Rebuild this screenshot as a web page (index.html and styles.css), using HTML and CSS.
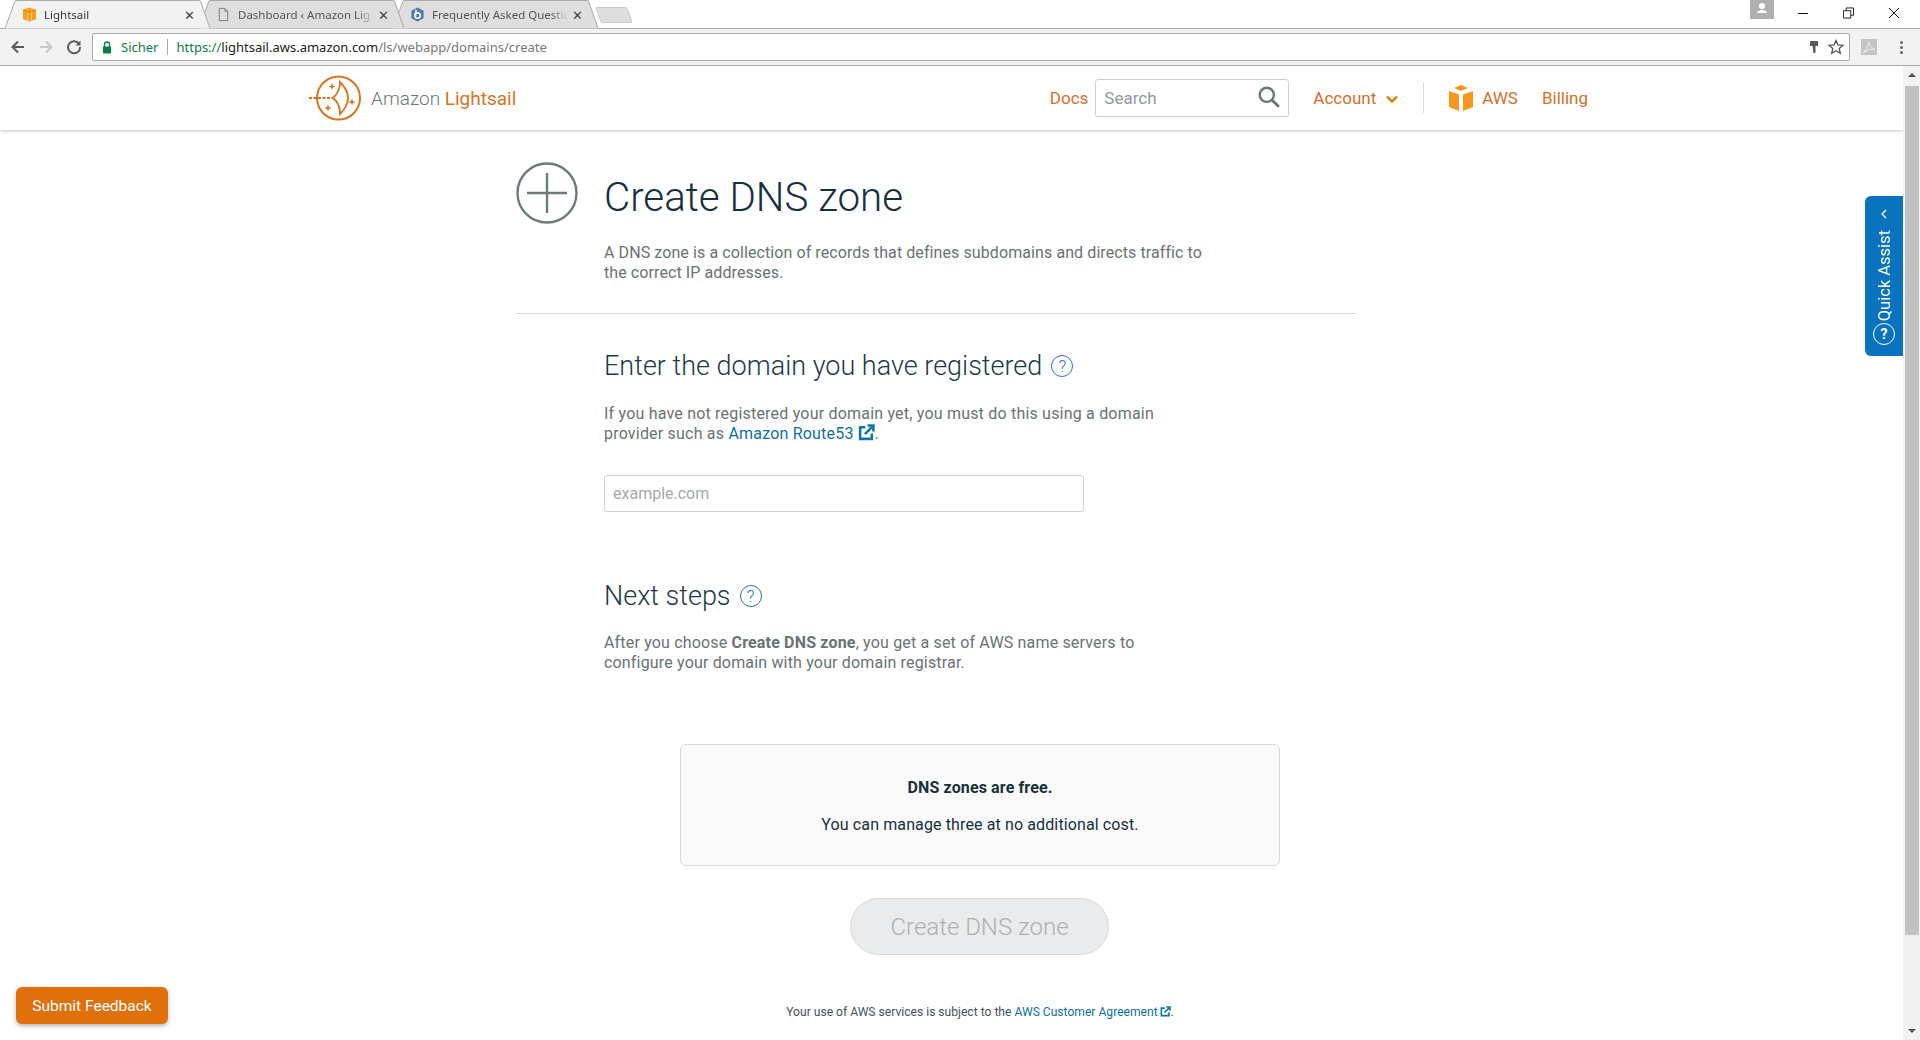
FILE: index.html
```html
<!DOCTYPE html>
<html lang="en">
<head>
    <meta charset="UTF-8">
    <meta name="viewport" content="width=device-width, initial-scale=1.0">
    <link rel="stylesheet" href="styles.css">
    <title>Lightsail</title>
</head>
<body>
    <div class="tabstrip">
        <div class="tab tab-active">
            <svg class="tab-shape" viewBox="0 0 210 29" preserveAspectRatio="none"><path d="M0 28.5 H5 L15 1 Q15.500 .5 17 .5 H198 Q200 .5 200.500 1 L210 28.500" fill="#f2f2f2" stroke="#a9a9a9"/></svg>
            <svg class="tab-icon" viewBox="0 0 16 16"><path d="M8 .5 L15 3 V13 L8 15.500 L1 13 V3Z" fill="#f7a01f"/><path d="M6 4 V15 M10 4 V15" stroke="#ffd58a" stroke-width=".8"/><path d="M1 3.500 L8 5.500 L15 3.500" fill="none" stroke="#c7781a" stroke-width=".8"/></svg>
            <span class="tab-title">Lightsail</span>
            <span class="tab-close">&#10005;</span>
        </div>
        <div class="tab tab-second">
            <svg class="tab-shape" viewBox="0 0 210 29" preserveAspectRatio="none"><path d="M0 28.5 H5 L15 1 Q15.500 .5 17 .5 H198 Q200 .5 200.500 1 L210 28.500" fill="#dedede" stroke="#a9a9a9"/></svg>
            <svg class="tab-icon" viewBox="0 0 16 16"><path d="M3.500 1.500 H9.500 L12.500 4.500 V14.500 H3.500Z M9.500 1.500 V4.500 H12.500" fill="none" stroke="#777"/></svg>
            <span class="tab-title">Dashboard &lsaquo; Amazon Lig</span>
            <span class="tab-close">&#10005;</span>
        </div>
        <div class="tab">
            <svg class="tab-shape" viewBox="0 0 210 29" preserveAspectRatio="none"><path d="M0 28.5 H5 L15 1 Q15.500 .5 17 .5 H198 Q200 .5 200.500 1 L210 28.500" fill="#dedede" stroke="#a9a9a9"/></svg>
            <svg class="tab-icon" viewBox="0 0 16 16"><path d="M8 .5 L14.500 4 V12 L8 15.500 L1.500 12 V4Z" fill="#4a7ba6"/><circle cx="8" cy="9" r="3" fill="none" stroke="#fff" stroke-width="1.600"/><path d="M6.300 3 V9" stroke="#fff" stroke-width="1.600"/></svg>
            <span class="tab-title">Frequently Asked Questic</span>
            <span class="tab-close">&#10005;</span>
        </div>
        <div class="newtab"></div>
        <div class="win-controls">
            <div class="profile">
                <svg viewBox="0 0 24 19" width="24" height="19"><circle cx="12" cy="6" r="3" fill="#fff"/><path d="M7 12 Q12 8 17 12 V13 H7Z" fill="#fff"/></svg>
            </div>
            <svg class="win-btn win-min" viewBox="0 0 12 12"><path d="M1 6.500 H11" stroke="#111"/></svg>
            <svg class="win-btn win-max" viewBox="0 0 12 12"><path d="M.5 3.500 H8.500 V11.500 H.5Z M3.500 3.500 V.5 H11.500 V8.500 H8.500" fill="none" stroke="#111"/></svg>
            <svg class="win-btn win-close" viewBox="0 0 12 12"><path d="M1 1 L11 11 M11 1 L1 11" stroke="#111"/></svg>
        </div>
    </div>

    <div class="toolbar">
        <svg class="nav-icon" viewBox="0 0 16 16"><path d="M14 8 H3 M8 2.500 L2.500 8 L8 13.500" fill="none" stroke="#5a5a5a" stroke-width="2"/></svg>
        <svg class="nav-icon" viewBox="0 0 16 16"><path d="M2 8 H13 M8 2.500 L13.500 8 L8 13.500" fill="none" stroke="#c8c8c8" stroke-width="2"/></svg>
        <svg class="nav-icon" viewBox="0 0 16 16"><path d="M13 5 A6 6 0 1 0 14 8" fill="none" stroke="#5a5a5a" stroke-width="2"/><path d="M14.500 1.500 V6.500 H9.500Z" fill="#5a5a5a"/></svg>
        <div class="omnibox">
            <svg class="lock" viewBox="0 0 10 13"><path d="M2.500 6 V3.500 A2.500 2.500 0 0 1 7.500 3.500 V6" fill="none" stroke="#0b8043" stroke-width="1.300"/><rect x="1" y="5.500" width="8" height="7" fill="#0b8043"/></svg>
            <span class="secure">Sicher</span>
            <span class="omni-sep"></span>
            <span class="url"><span class="url-https">https://</span><span class="url-host">lightsail.aws.amazon.com</span>/ls/webapp/domains/create</span>
            <svg class="omni-key" viewBox="0 0 10 14"><path d="M1 1 H9 V6 H6.500 V13 H4.500 L3.500 6 H1Z" fill="#5a5a5a"/></svg>
            <svg class="omni-star" viewBox="0 0 16 16"><path d="M8 1.500 L10 6 L14.800 6.400 L11.200 9.600 L12.300 14.300 L8 11.800 L3.700 14.300 L4.800 9.600 L1.200 6.400 L6 6Z" fill="none" stroke="#555" stroke-width="1.300"/></svg>
        </div>
        <div class="ext-pdf">
            <svg viewBox="0 0 16 16" width="16" height="16"><path d="M2 14 Q6 11 8 3 Q8 8 14 10 Q8 9 2 14Z" fill="none" stroke="#eee"/></svg>
        </div>
        <div class="chrome-menu"><i></i><i></i><i></i></div>
    </div>

    <div class="viewport">
        <div class="page">
            <header class="site-header">
                <a class="brand">
                    <svg class="brand-logo" viewBox="0 0 52 52">
                        <circle cx="29.500" cy="26" r="21.500" fill="none" stroke="#d8731f" stroke-width="2"/>
                        <path d="M0 26 H24" stroke="#d8731f" stroke-width="1.800" stroke-dasharray="3 1.500"/>
                        <path d="M31 10 Q31 20 24 26 Q31 31 31 42 Q47 26 31 10Z" fill="none" stroke="#d8731f" stroke-width="1.800"/>
                        <path d="M23 11 L24 13.500 L26.500 14.500 L24 15.500 L23 18 L22 15.500 L19.500 14.500 L22 13.500Z M43 26.500 L44 29 L46.500 30 L44 31 L43 33.500 L42 31 L39.500 30 L42 29Z M19 32.500 L20 35 L22.500 36 L20 37 L19 39.500 L18 37 L15.500 36 L18 35Z" fill="#d8731f"/>
                    </svg>
                    <span class="brand-name">Amazon <b>Lightsail</b></span>
                </a>
                <nav class="site-nav">
                    <a class="nav-link nav-docs">Docs</a>
                    <div class="search-box">
                        <span class="search-hint">Search</span>
                        <svg class="search-icon" viewBox="0 0 22 22"><circle cx="9" cy="9" r="6.500" fill="none" stroke="#6b7776" stroke-width="2.200"/><path d="M14 14 L20 20" stroke="#6b7776" stroke-width="2.600"/></svg>
                    </div>
                    <a class="nav-link nav-account">Account
                        <svg class="chevron" viewBox="0 0 12 8"><path d="M1 1.500 L6 6.500 L11 1.500" fill="none" stroke="#e07b00" stroke-width="2.400"/></svg>
                    </a>
                    <span class="nav-sep"></span>
                    <a class="nav-link nav-aws">
                        <svg class="cube" viewBox="0 0 26 26"><path d="M13 0 L20 3 L13 6 L6 3Z M1 6 L11 9.500 V26 L1 22Z M25 6 L15 9.500 V26 L25 22Z" fill="#f7981d"/></svg>
                        AWS
                    </a>
                    <a class="nav-link nav-billing">Billing</a>
                </nav>
            </header>

            <main class="content">
                <div class="title-row">
                    <svg class="plus-icon" viewBox="0 0 62 62"><circle cx="31" cy="31" r="29.500" fill="none" stroke="#6f7b7b" stroke-width="2.400"/><path d="M31 11 V51 M11 31 H51" stroke="#6f7b7b" stroke-width="2.400"/></svg>
                    <h1>Create DNS zone</h1>
                </div>
                <p class="lead">A DNS zone is a collection of records that defines subdomains and directs traffic to the correct IP addresses.</p>
                <hr class="divider">

                <section class="block">
                    <h2>Enter the domain you have registered <span class="help">?</span></h2>
                    <p>If you have not registered your domain yet, you must do this using a domain provider such as <a class="link">Amazon Route53 <svg class="ext" viewBox="0 0 16 16"><path d="M7 3 H2 V14 H13 V9" fill="none" stroke="#0f76a8" stroke-width="2.400"/><path d="M6.500 9.500 L13 3 M9 1.500 H14.500 V7" fill="none" stroke="#0f76a8" stroke-width="2.400"/></svg></a>.</p>
                    <input class="domain-input" type="text" placeholder="example.com">
                </section>

                <section class="block block-next">
                    <h2>Next steps <span class="help">?</span></h2>
                    <p>After you choose <b>Create DNS zone</b>, you get a set of AWS name servers to configure your domain with your domain registrar.</p>
                </section>

                <div class="free-panel">
                    <strong>DNS zones are free.</strong>
                    <span>You can manage three at no additional cost.</span>
                </div>
                <button class="create-btn" disabled>Create DNS zone</button>
                <p class="legal">Your use of AWS services is subject to the <a class="link">AWS Customer Agreement<svg class="ext ext-small" viewBox="0 0 16 16"><path d="M7 3 H2 V14 H13 V9" fill="none" stroke="#0f76a8" stroke-width="2.400"/><path d="M6.500 9.500 L13 3 M9 1.500 H14.500 V7" fill="none" stroke="#0f76a8" stroke-width="2.400"/></svg></a>.</p>
            </main>

            <button class="feedback-btn">Submit Feedback</button>
            <div class="quick-assist">
                <svg class="qa-chevron" viewBox="0 0 10 10"><path d="M7 1 L3 5 L7 9" fill="none" stroke="#fff" stroke-width="1.400"/></svg>
                <span class="qa-label">Quick Assist</span>
                <span class="qa-help">?</span>
            </div>
        </div>
        <div class="scrollbar">
            <span class="sb-up"></span>
            <span class="sb-thumb"></span>
            <span class="sb-down"></span>
        </div>
    </div>
</body>
</html>
```

FILE: styles.css
```css
* {
    box-sizing: border-box;
}

html, body {
    height: 100%;
}

body {
    display: flex;
    flex-direction: column;
    margin: 0;
    overflow: hidden;
    background-color: #fff;
    color: #687373;
    font-family: "Roboto", "Noto Sans", sans-serif;
    font-size: 16px;
}

/* browser chrome */
.tabstrip {
    display: flex;
    flex: none;
    height: 29px;
    border-bottom: 1px solid #a9a9a9;
}

.tab {
    position: relative;
    display: flex;
    flex: none;
    align-items: center;
    width: 210px;
    height: 29px;
    margin-right: -16px;
    padding-left: 22px;
    color: #555;
    font-family: "Noto Sans", sans-serif;
    font-size: 11.500px;
}

.tab-active {
    color: #333;
    z-index: 3;
}

.tab-second {
    z-index: 2;
}

.tab-shape {
    position: absolute;
    top: 0;
    left: 0;
    width: 100%;
    height: 29px;
}

.tab-icon {
    position: relative;
    flex: none;
    width: 15px;
    height: 15px;
    margin-right: 7px;
}

.tab-title {
    position: relative;
    width: 136px;
    margin-right: 4px;
    overflow: hidden;
    white-space: nowrap;
    mask-image: linear-gradient(to right, #000 88%, transparent);
}

.tab-close {
    position: relative;
    color: #444;
    font-size: 13px;
}

.newtab {
    width: 32px;
    height: 16px;
    margin: 7px 0 0 16px;
    background-color: #dedede;
    border: 1px solid #c9c9c9;
    border-radius: 2px;
    transform: skewX(20deg);
}

.win-controls {
    display: flex;
    align-items: flex-start;
    margin-left: auto;
    padding-right: 20px;
}

.profile {
    width: 24px;
    height: 19px;
    margin-right: 23px;
    background-color: #b0b0b0;
}

.win-btn {
    width: 12px;
    height: 12px;
    margin-top: 7px;
}

.win-min {
    margin-right: 34px;
}

.win-max {
    width: 11px;
    margin-right: 34px;
}

.toolbar {
    display: flex;
    flex: none;
    align-items: center;
    height: 37px;
    padding-left: 10px;
    background-color: #f2f2f2;
    border-bottom: 1px solid #a9a9a9;
}

.nav-icon {
    flex: none;
    width: 16px;
    height: 16px;
    margin-right: 12px;
}

.omnibox {
    display: flex;
    flex: none;
    align-items: center;
    width: 1758px;
    height: 28px;
    margin-left: -2px;
    padding-left: 9px;
    background-color: #fff;
    border: 1px solid #a9a9a9;
    border-radius: 2px;
    font-family: "Noto Sans", sans-serif;
    font-size: 13px;
}

.lock {
    width: 10px;
    height: 13px;
    margin-right: 9px;
}

.secure {
    color: #0b8043;
}

.omni-sep {
    width: 1px;
    height: 16px;
    margin: 0 8px 0 9px;
    background-color: #a9a9a9;
}

.url {
    color: #777;
}

.url-https {
    color: #0b8043;
}

.url-host {
    color: #222;
}

.omni-key {
    width: 10px;
    height: 14px;
    margin-left: auto;
    margin-right: 9px;
}

.omni-star {
    width: 16px;
    height: 16px;
    margin-right: 5px;
}

.ext-pdf {
    display: flex;
    align-items: center;
    justify-content: center;
    width: 16px;
    height: 16px;
    margin-left: 11px;
    background-color: #c4c4c4;
}

.chrome-menu {
    display: flex;
    flex-direction: column;
    gap: 2px;
    margin-left: 23px;
}

.chrome-menu i {
    display: block;
    width: 3px;
    height: 3px;
    background-color: #666;
    border-radius: 50%;
}

/* page */
.viewport {
    position: relative;
    display: flex;
    flex: 1;
    min-height: 0;
}

.page {
    position: relative;
    flex: 1;
    min-width: 0;
    overflow: hidden;
}

.site-header {
    display: flex;
    align-items: center;
    height: 64px;
    padding: 0 315px 0 309px;
    background-color: #fff;
    box-shadow: 0 1px 3px rgba(0, 0, 0, 0.25);
}

.brand {
    display: flex;
    align-items: center;
}

.brand-logo {
    width: 52px;
    height: 52px;
    margin-right: 10px;
}

.brand-name {
    color: #6b7776;
    font-size: 19px;
    font-weight: 300;
}

.brand-name b {
    color: #d8731f;
    font-weight: 400;
}

.site-nav {
    display: flex;
    align-items: center;
    margin-left: auto;
}

.nav-link {
    display: flex;
    align-items: center;
    color: #d0702a;
    font-size: 17px;
}

.search-box {
    display: flex;
    align-items: center;
    justify-content: space-between;
    width: 194px;
    height: 38px;
    margin: 0 24px 0 7px;
    padding: 0 7px 0 8px;
    border: 1px solid #ccd0d0;
    border-radius: 3px;
}

.search-hint {
    color: #8f9a9a;
    font-size: 17px;
}

.search-icon {
    width: 24px;
    height: 24px;
    margin-top: -3px;
}

.chevron {
    width: 12px;
    height: 8px;
    margin-left: 10px;
    margin-top: 2px;
}

.nav-sep {
    width: 1px;
    height: 30px;
    margin: 0 24px 0 25px;
    background-color: #d5d9d9;
}

.cube {
    width: 26px;
    height: 26px;
    margin-right: 8px;
}

.nav-billing {
    margin-left: 24px;
}

.content {
    width: 840px;
    margin-left: 516px;
}

.title-row {
    display: flex;
    align-items: center;
    height: 62px;
    margin-top: 32px;
}

.plus-icon {
    flex: none;
    width: 62px;
    height: 62px;
    margin-right: 26px;
}

h1 {
    margin: 8px 0 0;
    color: #16303e;
    font-size: 40.300px;
    font-weight: 300;
}

.lead {
    width: 612px;
    margin: 19px 0 0 88px;
    letter-spacing: 0.09px;
    line-height: 20px;
}

.divider {
    height: 1px;
    margin: 30px 0 0;
    border: 0;
    background-color: #d5d9d9;
}

.block {
    width: 565px;
    margin-left: 88px;
}

h2 {
    display: flex;
    align-items: center;
    gap: 9px;
    margin: 33px 0 0;
    color: #1e3a48;
    font-size: 27px;
    font-weight: 300;
    line-height: 38px;
}

.block p {
    margin: 19px 0 0;
    letter-spacing: 0.2px;
    line-height: 20px;
}

.help {
    display: flex;
    flex: none;
    align-items: center;
    justify-content: center;
    width: 22px;
    height: 22px;
    color: #2a6fc0;
    border: 1.500px solid #2a6fc0;
    border-radius: 50%;
    font-size: 17px;
}

.link {
    color: #0f6fa3;
}

.ext {
    width: 17px;
    height: 17px;
    vertical-align: -2px;
}

.ext-small {
    width: 11px;
    height: 11px;
    margin-left: 2px;
    vertical-align: -1px;
}

.domain-input {
    display: block;
    width: 480px;
    height: 37px;
    margin-top: 31px;
    padding: 0 8px;
    border: 1px solid #ccd0d0;
    border-radius: 3px;
    font-family: inherit;
    font-size: 16px;
}

.domain-input::placeholder {
    color: #a3abab;
}

.block-next h2 {
    margin-top: 65px;
}

.block-next p {
    margin-top: 18px;
    letter-spacing: 0.17px;
}

.free-panel {
    display: flex;
    flex-direction: column;
    align-items: center;
    gap: 18px;
    width: 600px;
    height: 122px;
    margin: 71px 0 0 164px;
    padding-top: 33px;
    color: #16303e;
    background-color: #fafafa;
    border: 1px solid #d5d9d9;
    border-radius: 6px;
    letter-spacing: 0.12px;
}

.create-btn {
    display: block;
    width: 259px;
    height: 57px;
    margin: 32px 0 0 334px;
    color: #a9b3b3;
    background-color: #e9ebec;
    border: 1px solid #d5d9d9;
    border-radius: 29px;
    font-family: inherit;
    font-size: 24px;
    font-weight: 300;
}

.legal {
    width: 600px;
    margin: 50px 0 0 164px;
    color: #44525c;
    font-size: 12.100px;
    text-align: center;
}

.feedback-btn {
    position: absolute;
    left: 16px;
    bottom: 16px;
    width: 152px;
    height: 37px;
    color: #fff;
    background-color: #e0700c;
    border: 0;
    border-radius: 6px;
    box-shadow: 0 2px 4px rgba(0, 0, 0, 0.3);
    font-family: inherit;
    font-size: 15.500px;
}

.quick-assist {
    position: absolute;
    top: 130px;
    right: 0;
    display: flex;
    flex-direction: column;
    align-items: center;
    width: 38px;
    height: 160px;
    padding-top: 13px;
    color: #fff;
    background-color: #0a73bf;
    border-radius: 6px 0 0 6px;
}

.qa-chevron {
    flex: none;
    width: 10px;
    height: 10px;
}

.qa-label {
    flex: none;
    margin-top: 11px;
    font-size: 16.500px;
    transform: rotate(180deg);
    white-space: nowrap;
    writing-mode: vertical-rl;
}

.qa-help {
    display: flex;
    flex: none;
    align-items: center;
    justify-content: center;
    width: 22px;
    height: 22px;
    margin-top: 2px;
    border: 1.500px solid #fff;
    border-radius: 50%;
    font-size: 14px;
    font-weight: 700;
}

.scrollbar {
    position: relative;
    display: flex;
    flex: none;
    flex-direction: column;
    align-items: center;
    width: 17px;
    background-color: #f1f1f1;
}

.sb-up {
    width: 0;
    height: 0;
    margin-top: 7px;
    border-left: 4px solid transparent;
    border-right: 4px solid transparent;
    border-bottom: 4px solid #505050;
}

.sb-thumb {
    width: 14px;
    height: 849px;
    margin-top: 9px;
    background-color: #c1c1c1;
}

.sb-down {
    width: 0;
    height: 0;
    margin-top: auto;
    margin-bottom: 7px;
    border-left: 4px solid transparent;
    border-right: 4px solid transparent;
    border-top: 4px solid #505050;
}
```
